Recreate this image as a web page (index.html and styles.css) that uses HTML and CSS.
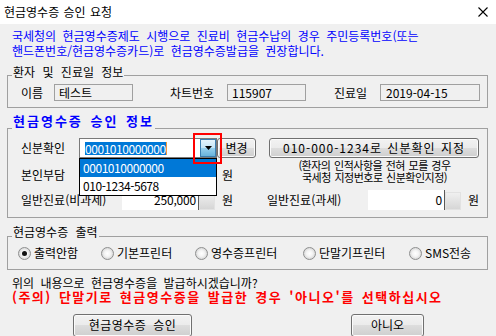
FILE: index.html
```html
<!DOCTYPE html>
<html lang="ko">
<head>
<meta charset="utf-8">
<title>현금영수증 승인 요청</title>
<link rel="stylesheet" href="styles.css">
</head>
<body>
<div class="titlebar">
  <span class="title">현금영수증 승인 요청</span>
  <svg class="close" width="10" height="10" viewBox="0 0 10 10"><path d="M0.5 0.5 L9.5 9.5 M9.5 0.5 L0.5 9.5" stroke="#000" stroke-width="1.1" fill="none"/></svg>
</div>
<div class="content">
  <p class="notice">국세청의 현금영수증제도 시행으로 진료비 현금수납의 경우 주민등록번호(또는<br>핸드폰번호/현금영수증카드)로 현금영수증발급을 권장합니다.</p>

  <section class="group g1">
    <div class="gtitle">환자 및 진료일 정보</div>
    <div class="info-row">
      <span class="lbl l-name">이름</span><span class="ro ro-name">테스트</span>
      <span class="lbl l-chart">차트번호</span><span class="ro ro-chart">115907</span>
      <span class="lbl l-date">진료일</span><span class="ro ro-date">2019-04-15</span>
    </div>
  </section>

  <section class="group g2">
    <div class="gtitle gtitle-blue">현금영수증 승인 정보</div>
    <div class="approve-grid">
      <div class="cell r1 ca">
        <span class="lbl l-id">신분확인</span>
        <div class="combo">
          <span class="combo-text"><span class="sel">0001010000000</span><span class="caret"></span></span>
          <span class="combo-btn"><svg width="7" height="4" viewBox="0 0 7 4"><polygon points="0,0 7,0 3.5,4" fill="#000"/></svg></span>
          <ul class="combo-list">
            <li class="opt opt-on">0001010000000</li>
            <li class="opt">010-1234-5678</li>
          </ul>
          <span class="mark"></span>
        </div>
        <button class="btn btn-change">변경</button>
      </div>
      <div class="cell r1 cb">
        <button class="btn btn-assign">010-000-1234로 신분확인 지정</button>
      </div>
      <div class="cell r2 ca">
        <span class="lbl l-money">본인부담</span>
        <span class="money"><span class="money-in"></span><span class="spin"></span></span>
        <span class="won">원</span>
      </div>
      <div class="cell r2 cb note">(환자의 인적사항을 전혀 모를 경우<br>국세청 지정번호로 신분확인지정)</div>
      <div class="cell r3 ca">
        <span class="lbl l-money">일반진료(비과세)</span>
        <span class="money"><span class="money-in">250,000</span><span class="spin"></span></span>
        <span class="won">원</span>
      </div>
      <div class="cell r3 cb">
        <span class="lbl l-money">일반진료(과세)</span>
        <span class="money"><span class="money-in">0</span><span class="spin"></span></span>
        <span class="won">원</span>
      </div>
    </div>
  </section>

  <section class="group g3">
    <div class="gtitle">현금영수증 출력</div>
    <div class="radio-row">
      <label class="opt-radio"><span class="radio on"></span>출력안함</label>
      <label class="opt-radio"><span class="radio"></span>기본프린터</label>
      <label class="opt-radio"><span class="radio"></span>영수증프린터</label>
      <label class="opt-radio"><span class="radio"></span>단말기프린터</label>
      <label class="opt-radio"><span class="radio"></span>SMS전송</label>
    </div>
  </section>

  <p class="confirm">위의 내용으로 현금영수증을 발급하시겠습니까?</p>
  <p class="warn">(주의) 단말기로 현금영수증을 발급한 경우 '아니오'를 선택하십시오</p>

  <div class="actions">
    <button class="btn btn-big btn-ok">현금영수증 승인</button>
    <button class="btn btn-big btn-no">아니오</button>
  </div>
</div>
</body>
</html>
```

FILE: styles.css
```css
* { box-sizing: border-box; }
html, body { margin: 0; padding: 0; }
body {
  width: 496px;
  height: 336px;
  overflow: hidden;
  background: #f0f0f0;
  font-family: "Noto Sans CJK KR", "Noto Sans", sans-serif;
  font-size: 12px;
  color: #000;
  word-spacing: 3px;
}
p { margin: 0; }

.titlebar {
  height: 24px;
  background: #fff;
  display: flex;
  align-items: center;
  justify-content: space-between;
  padding: 0 8px 0 4px;
}
.title { line-height: 14px; word-spacing: 1px; }
.close { display: block; }

.content { padding: 4px 8px 0 7px; }

.notice {
  margin-left: 5px;
  line-height: 15px;
  color: #0000ff;
}

.group { border: 1px solid #a0a0a0; }
.gtitle {
  width: fit-content;
  margin-left: 4px;
  padding: 0 1px;
  background: #f0f0f0;
  line-height: 14px;
  word-spacing: 4px;
}
.g1 { margin-top: 17px; padding-bottom: 6px; }
.g1 .gtitle { margin-top: -11px; }
.info-row {
  margin-top: 5px;
  padding-left: 13px;
  height: 17px;
  display: flex;
  align-items: center;
}
.lbl { line-height: 14px; white-space: nowrap; }
.l-name { width: 33px; }
.l-chart { width: 57px; margin-left: 37px; }
.l-date { width: 46px; margin-left: 28px; }
.ro {
  height: 17px;
  border: 1px solid #a0a0a0;
  line-height: 15px;
  padding-left: 4px;
}
.ro-name, .ro-chart { width: 79px; }
.ro-date { width: 100px; padding-left: 5px; }

.g2 { margin-top: 20px; padding-bottom: 7px; }
.gtitle-blue {
  margin-top: -16px;
  line-height: 16px;
  font-size: 13px;
  font-weight: bold;
  letter-spacing: 2px;
  word-spacing: 2px;
  color: #0000ff;
}
.approve-grid {
  margin-top: 9px;
  padding-left: 13px;
  display: grid;
  grid-template-columns: 246px 1fr;
  grid-template-rows: 20px 7px 20px 5px 20px;
}
.cell { display: flex; align-items: center; }
.ca { grid-column: 1; }
.cb { grid-column: 2; }
.r1 { grid-row: 1; }
.r2 { grid-row: 3; }
.r3 { grid-row: 5; }

.l-id { width: 58px; }
.combo {
  position: relative;
  width: 138px;
  height: 20px;
  border: 1px solid #7a7a7a;
  background: #fff;
  display: flex;
  align-items: center;
}
.combo-text {
  flex: 1;
  display: flex;
  align-items: center;
  padding-left: 5px;
}
.sel {
  background: #0078d7;
  color: #fff;
  line-height: 13px;
  letter-spacing: -0.45px;
}
.caret { width: 1px; height: 13px; background: #f29a3a; }
.combo-btn {
  width: 16px;
  height: 18px;
  border: 1px solid #3c7fb1;
  background: linear-gradient(#e5f4fc, #c4e5f6 50%, #98d1ef 50%, #68b3db);
  display: flex;
  align-items: center;
  justify-content: center;
}
.combo-btn svg { display: block; }
.combo-list {
  position: absolute;
  left: -1px;
  top: 19px;
  width: 138px;
  margin: 0;
  padding: 0;
  list-style: none;
  border: 1px solid #000;
  background: #fff;
  z-index: 2;
}
.opt {
  height: 18px;
  line-height: 18px;
  padding-left: 3px;
  letter-spacing: -0.45px;
}
.opt-on { background: #0078d7; color: #fff; }
.mark {
  position: absolute;
  left: 113px;
  top: -6px;
  width: 29px;
  height: 31px;
  border: 2px solid #ff0000;
  z-index: 3;
}

.btn {
  font-family: inherit;
  font-size: 12px;
  color: #000;
  border: 1px solid #707070;
  border-radius: 3px;
  background: linear-gradient(#f2f2f2, #ebebeb 50%, #dddddd 50%, #cfcfcf);
  box-shadow: inset 0 0 0 1px #fbfbfb;
  padding: 0;
  margin: 0;
  line-height: 14px;
  word-spacing: 3px;
}
.btn-change { width: 39px; height: 20px; }
.btn-assign {
  width: 210px;
  height: 20px;
  margin-left: 2px;
  letter-spacing: 1px;
  word-spacing: 1px;
}

.l-money { width: 101px; }
.money { display: flex; align-items: flex-end; height: 20px; }
.money-in {
  width: 77px;
  height: 20px;
  background: #fff;
  border-right: 1px solid #5a5a5a;
  text-align: right;
  padding-right: 2px;
  line-height: 20px;
  letter-spacing: -0.2px;
}
.spin {
  width: 16px;
  height: 18px;
  border: 1px solid #e2e2e2;
  background: linear-gradient(#f0f0f0, #d6d6d6);
}
.won { margin-left: 7px; line-height: 14px; }

.note {
  align-self: start;
  margin-top: -6px;
  padding-right: 5px;
  display: block;
  text-align: center;
  font-size: 11px;
  line-height: 12px;
  letter-spacing: -0.5px;
  word-spacing: 1px;
}

.g3 { margin-top: 18px; padding-bottom: 8px; }
.g3 .gtitle { margin-top: -12px; }
.radio-row {
  margin-top: 6px;
  height: 16px;
  padding-left: 10px;
  display: grid;
  grid-template-columns: 83px 94px 108px 106px auto;
}
.opt-radio {
  display: flex;
  align-items: center;
  gap: 3px;
  line-height: 14px;
  white-space: nowrap;
}
.radio {
  width: 13px;
  height: 13px;
  border-radius: 50%;
  border: 1px solid #8e8f8f;
  background: radial-gradient(circle, #ffffff 0, #f4f4f4 3px, #d6d6d6 6px);
  display: flex;
  align-items: center;
  justify-content: center;
}
.radio.on::after {
  content: "";
  width: 5px;
  height: 5px;
  border-radius: 50%;
  background: #111;
}

.confirm {
  margin: 6px 0 0 5px;
  line-height: 14px;
}
.warn {
  margin-left: 5px;
  line-height: 14px;
  color: #ff0000;
  font-size: 13px;
  font-weight: bold;
  letter-spacing: 1.5px;
  word-spacing: 2px;
  white-space: nowrap;
}

.actions {
  margin-top: 10px;
  padding-left: 66px;
  display: flex;
  gap: 159px;
}
.btn-big {
  height: 23px;
  padding-bottom: 2px;
  font-size: 12px;
}
.btn-ok { width: 119px; letter-spacing: 0.5px; }
.btn-no { width: 73px; }
```
